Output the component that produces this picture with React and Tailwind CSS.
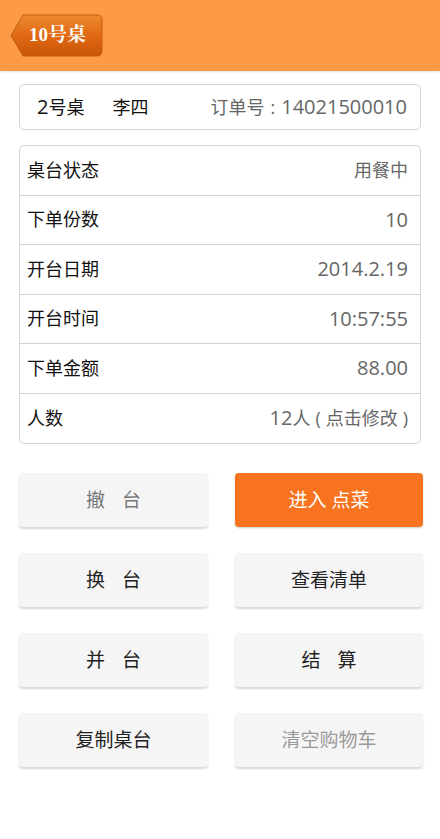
import React from "react";

const font = { fontFamily: '"Open Sans", "Noto Sans CJK SC", sans-serif' };

function Btn({ children, variant = "default" }) {
  const base =
    "h-[54px] rounded-[4px] flex items-center justify-center text-[19px]";
  const cls =
    variant === "primary"
      ? "bg-[#f7731f] text-white shadow-[0_1px_2px_rgba(0,0,0,0.2)]"
      : variant === "muted"
      ? "bg-[#f6f5f6] text-[#999999] shadow-[0_2px_2px_rgba(0,0,0,0.15)]"
      : "bg-[#f6f5f6] text-[#222222] shadow-[0_2px_2px_rgba(0,0,0,0.15)]";
  return <div className={`${base} ${cls}`}>{children}</div>;
}

function Spaced({ a, b }) {
  return (
    <span className="flex gap-[17px]">
      <span>{a}</span>
      <span>{b}</span>
    </span>
  );
}

function Num({ children }) {
  return <span className="text-[20px]">{children}</span>;
}

export default function App() {
  const rows = [
    ["桌台状态", <span>用餐中</span>],
    ["下单份数", <Num>10</Num>],
    ["开台日期", <Num>2014.2.19</Num>],
    ["开台时间", <Num>10:57:55</Num>],
    ["下单金额", <Num>88.00</Num>],
    [
      "人数",
      <span className="flex items-baseline">
        <Num>12</Num>
        <span>人</span>
        <span className="ml-[5px]">(</span>
        <span className="ml-[5px]">点击修改</span>
        <span className="ml-[5px]">)</span>
      </span>,
    ],
  ];
  return (
    <div className="w-[440px] h-[839px] bg-white" style={font}>
      <div className="h-[71px] bg-[#fd9a45] flex items-center pl-[10px] shadow-[0_1px_2px_rgba(0,0,0,0.12)]">
        <div className="relative w-[93px] h-[43px] flex items-center justify-center pl-[2px]">
          <svg className="absolute inset-0" width="93" height="43" viewBox="0 0 93 43">
            <defs>
              <linearGradient id="bg" x1="0" y1="0" x2="0" y2="1">
                <stop offset="0" stopColor="#ee8a30" />
                <stop offset="0.5" stopColor="#e06a14" />
                <stop offset="1" stopColor="#c95408" />
              </linearGradient>
            </defs>
            <path
              d="M13 1 L87 1 Q92 1 92 6 L92 37 Q92 42 87 42 L13 42 L1 21.5 Z"
              fill="url(#bg)"
              stroke="#c25a12"
              strokeWidth="1"
            />
          </svg>
          <span
            className="relative text-white text-[19px] font-bold"
            style={{ fontFamily: '"Liberation Serif", "Noto Serif CJK SC", "Noto Sans CJK SC", serif' }}
          >
            10号桌
          </span>
        </div>
      </div>

      <div className="px-[19px] pt-[13px]">
        <div className="h-[46px] border border-[#d4d4d4] rounded-[5px] flex items-center px-[13px] text-[18px]">
          <span className="text-[#111] ml-[4px]">
            <Num>2</Num>号桌
          </span>
          <span className="text-[#111] ml-[28px]">李四</span>
          <span className="ml-auto text-[#666] flex items-baseline">
            <span>订单号</span>
            <span className="mx-[6px]">:</span>
            <Num>14021500010</Num>
          </span>
        </div>

        <div className="mt-[15px] border border-[#d4d4d4] rounded-[5px]">
          {rows.map(([k, v], i) => (
            <div
              key={k}
              className={`h-[49.5px] flex items-center pl-[7px] pr-[12px] text-[18px] ${
                i < rows.length - 1 ? "border-b border-[#d4d4d4]" : ""
              }`}
            >
              <span className="text-[#111]">{k}</span>
              <span className="ml-auto text-[#666]">{v}</span>
            </div>
          ))}
        </div>

        <div className="mt-[29px] mr-[-2px] grid grid-cols-[189px_188px] justify-between gap-y-[26px]">
          <Btn variant="muted">
            <span className="text-[#777]">
              <Spaced a="撤" b="台" />
            </span>
          </Btn>
          <Btn variant="primary">进入 点菜</Btn>
          <Btn>
            <Spaced a="换" b="台" />
          </Btn>
          <Btn>查看清单</Btn>
          <Btn>
            <Spaced a="并" b="台" />
          </Btn>
          <Btn>
            <Spaced a="结" b="算" />
          </Btn>
          <Btn>复制桌台</Btn>
          <Btn variant="muted">清空购物车</Btn>
        </div>
      </div>
    </div>
  );
}
